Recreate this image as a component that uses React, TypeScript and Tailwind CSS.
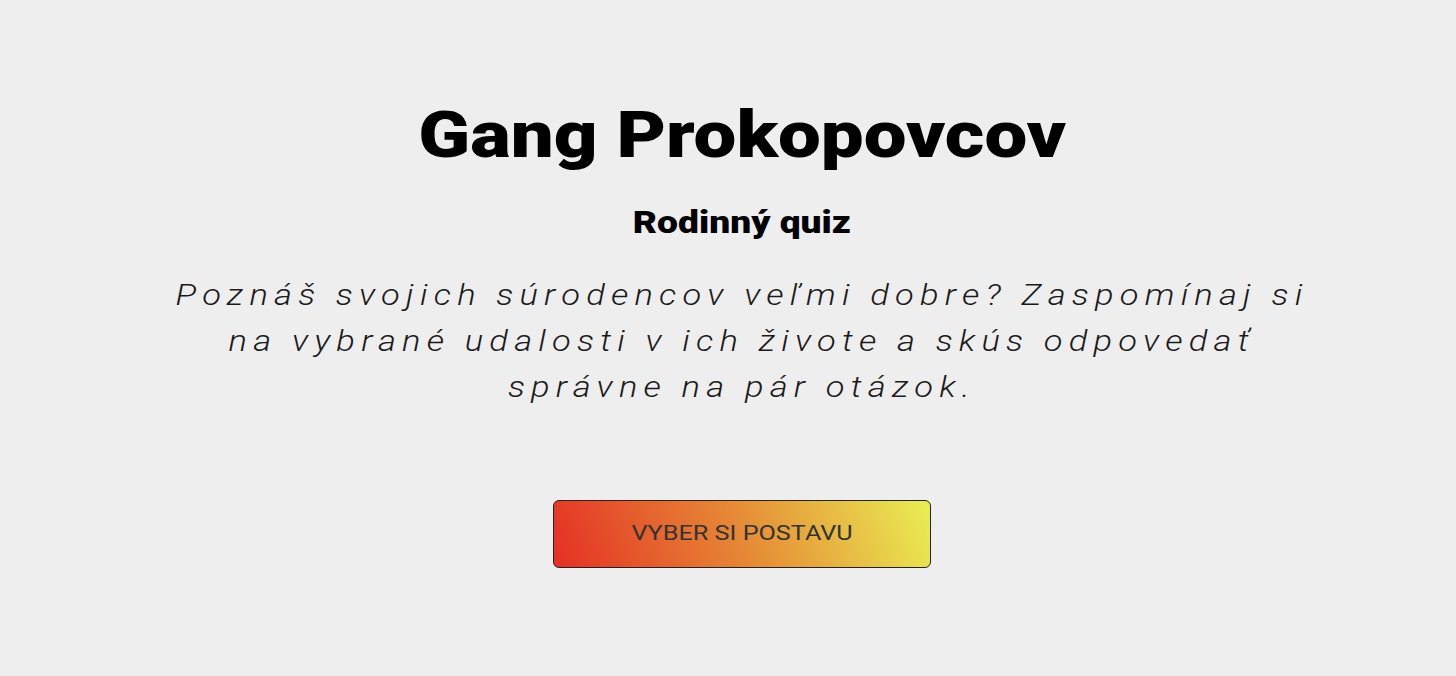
import React from "react";

const App = () => {
  return (
    <div className="min-h-screen w-full bg-[#eeeeee] font-['Roboto',sans-serif] flex flex-col items-center pt-[96px] pl-[28px]">
      <h1 className="text-[64px] leading-[80px] font-black text-black scale-x-[1.19]">
        Gang Prokopovcov
      </h1>
      <h2 className="mt-[27px] text-[31px] leading-[40px] font-black text-black scale-x-[1.2]">
        Rodinný quiz
      </h2>
      <p className="mt-[29px] text-center text-[29px] leading-[46px] font-light italic tracking-[0.18em] text-[#1a1a1a] scale-x-[1.19] whitespace-nowrap">
        Poznáš svojich súrodencov veľmi dobre? Zaspomínaj si
        <br />
        na vybrané udalosti v ich živote a skús odpovedať
        <br />
        správne na pár otázok.
      </p>
      <button className="mt-[90px] w-[378px] h-[68px] rounded-[6px] border border-[#222] bg-linear-[68deg] from-[#e52f25] via-[#e68a36] to-[#e9ef53] text-[#333]">
        <span className="inline-block text-[21px] font-normal scale-x-[1.2]">
          VYBER SI POSTAVU
        </span>
      </button>
    </div>
  );
};

export default App;
